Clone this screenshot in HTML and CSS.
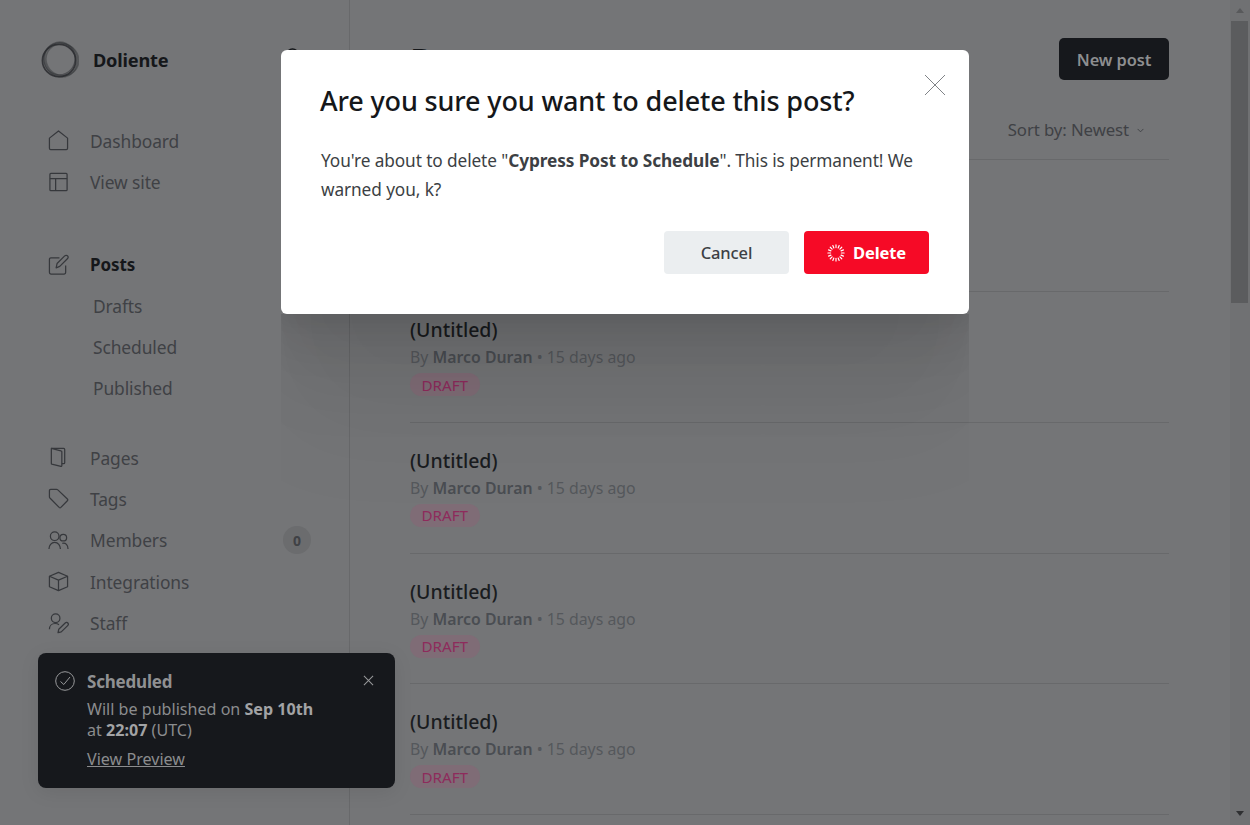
FILE: index.html
```html
<!DOCTYPE html>
<html lang="en">
<head>
<meta charset="utf-8">
<title>Posts - Doliente</title>
<link rel="stylesheet" href="styles.css">
</head>
<body>
<div class="app">
  <aside class="sidebar">
    <div class="brand">
      <svg class="logo" viewBox="0 0 40 40" fill="none" stroke="#2a2c2f">
        <ellipse cx="19" cy="20.500" rx="17.500" ry="17" stroke-width="1.800" opacity=".85"/>
        <ellipse cx="22" cy="18.500" rx="17.500" ry="16.500" stroke-width="1.500" opacity=".4" transform="rotate(30 20 20)"/>
        <ellipse cx="20" cy="19" rx="18.500" ry="17" stroke-width="1.800" opacity=".4" transform="rotate(65 20 20)"/>
        <ellipse cx="19" cy="21" rx="17" ry="16.500" stroke-width="1.400" opacity=".5" transform="rotate(110 20 20)"/>
      </svg>
      <span class="brand-name">Doliente</span>
      <svg class="search" viewBox="0 0 16 16" fill="none" stroke="#15171a" stroke-width="1.500"><circle cx="8" cy="7" r="6"/></svg>
    </div>
    <nav class="nav-group">
      <a class="nav-item">
        <svg class="nav-icon" viewBox="0 0 22 22"><path d="M1.500 8.500 11 1l9.500 7.500v10.700a1.300 1.300 0 0 1-1.300 1.300H2.800a1.300 1.300 0 0 1-1.300-1.300z"/></svg>
        Dashboard</a>
      <a class="nav-item">
        <svg class="nav-icon" viewBox="0 0 22 22"><rect x="2" y="1.500" width="18" height="18" rx="1"/><path d="M2 7h18M8 7v12.500"/></svg>
        View site</a>
    </nav>
    <nav class="nav-group nav-group-tight">
      <a class="nav-item nav-active">
        <svg class="nav-icon" viewBox="0 0 22 22"><path d="M12 4H3a1.500 1.500 0 0 0-1.500 1.500v14A1.500 1.500 0 0 0 3 21h14a1.500 1.500 0 0 0 1.500-1.500V12"/><path d="M8.500 14.500 9.500 10 17.500 2c1-1 2.300-.8 3 0s.8 2-.2 3l-8 8z"/></svg>
        Posts</a>
      <a class="nav-sub">Drafts</a>
      <a class="nav-sub">Scheduled</a>
      <a class="nav-sub">Published</a>
    </nav>
    <nav class="nav-group">
      <a class="nav-item">
        <svg class="nav-icon" viewBox="0 0 22 22"><path d="M3.500 1.500h13a1 1 0 0 1 1 1v14a1 1 0 0 1-1 1h-2"/><path d="M3.500 1.500l10 2.500a1 1 0 0 1 1 1v14.500a.8.800 0 0 1-1 .8l-9.500-2.300a1 1 0 0 1-.5-1z"/></svg>
        Pages</a>
      <a class="nav-item">
        <svg class="nav-icon" viewBox="0 0 22 22"><path d="M1.500 2.800A1.300 1.300 0 0 1 2.800 1.500H9a2 2 0 0 1 1.300.5l10 9.500a1.300 1.300 0 0 1 0 1.800l-6.800 7a1.300 1.300 0 0 1-1.800 0L2 10.500a2 2 0 0 1-.5-1.300z"/></svg>
        Tags</a>
      <a class="nav-item">
        <svg class="nav-icon" viewBox="0 0 22 22"><circle cx="7" cy="6.500" r="4.500"/><path d="M1 20c0-4 2.500-7 6-7s6 3 6 7"/><circle cx="16" cy="8" r="3.500"/><path d="M15 14c3.500-1 6 2 6 6"/></svg>
        Members<span class="count">0</span></a>
      <a class="nav-item">
        <svg class="nav-icon" viewBox="0 0 22 22"><path d="M11 1.500 20.500 5.500v11L11 20.500 1.500 16.500v-11z"/><path d="M1.500 5.500 11 9.500l9.500-4M11 9.500v11"/></svg>
        Integrations</a>
      <a class="nav-item">
        <svg class="nav-icon" viewBox="0 0 22 22"><circle cx="8" cy="5.500" r="4.500"/><path d="M1.500 17c0-3.500 2.500-6 6-6 1.500 0 3 .4 4 1.200"/><path d="M10.500 20.500l.8-3.500 6.700-6.500c1-.9 2.200-.7 2.800 0s.7 1.800-.2 2.700l-6.700 6.600z"/></svg>
        Staff</a>
    </nav>
  </aside>

  <main class="main">
    <header class="page-head">
      <h1 class="page-title">Posts</h1>
      <button class="btn-new">New post</button>
    </header>
    <div class="filters">
      <span class="sort">Sort by: Newest
        <svg class="caret" viewBox="0 0 8 5" fill="none" stroke="#3d3f43" stroke-width="1"><path d="M.7.700 4 4 7.300.700"/></svg>
      </span>
    </div>
    <section class="post-list">
      <article class="post">
        <h2 class="post-title">Cypress Post to Schedule</h2>
        <p class="post-meta">By <b>Marco Duran</b> • 15 days ago</p>
        <span class="badge">SCHEDULED</span>
      </article>
      <article class="post">
        <h2 class="post-title">(Untitled)</h2>
        <p class="post-meta">By <b>Marco Duran</b> • 15 days ago</p>
        <span class="badge">DRAFT</span>
      </article>
      <article class="post">
        <h2 class="post-title">(Untitled)</h2>
        <p class="post-meta">By <b>Marco Duran</b> • 15 days ago</p>
        <span class="badge">DRAFT</span>
      </article>
      <article class="post">
        <h2 class="post-title">(Untitled)</h2>
        <p class="post-meta">By <b>Marco Duran</b> • 15 days ago</p>
        <span class="badge">DRAFT</span>
      </article>
      <article class="post">
        <h2 class="post-title">(Untitled)</h2>
        <p class="post-meta">By <b>Marco Duran</b> • 15 days ago</p>
        <span class="badge">DRAFT</span>
      </article>
    </section>
  </main>

  <div class="scrollbar">
    <span class="arrow-up"></span>
    <span class="thumb-track"><span class="thumb"></span></span>
    <span class="arrow-down"></span>
  </div>
</div>

<div class="toast">
  <svg class="toast-icon" viewBox="0 0 20 20" fill="none" stroke="#98999b" stroke-width="1"><circle cx="10" cy="10" r="9.300"/><path d="M5.500 10.500 8.800 13.500 15 6"/></svg>
  <div class="toast-body">
    <div class="toast-title">Scheduled</div>
    <div class="toast-text">Will be published on <b>Sep 10th</b><br>at <b>22:07</b> (UTC)</div>
    <a class="toast-link">View Preview</a>
  </div>
  <svg class="toast-close" viewBox="0 0 12 12" fill="none" stroke="#98999b" stroke-width="1.100"><path d="M1 1l10 10M11 1 1 11"/></svg>
</div>

<div class="modal" role="dialog">
  <div class="modal-shade"><div class="modal-shade-box"></div></div>
  <svg class="modal-close" viewBox="0 0 22 22" fill="none" stroke="#5f6368" stroke-width=".8"><path d="M1 1l20 20M21 1 1 21"/></svg>
  <h2 class="modal-title">Are you sure you want to delete this post?</h2>
  <p class="modal-text">You're about to delete "<b>Cypress Post to Schedule</b>". This is permanent! We warned you, k?</p>
  <div class="modal-actions">
    <button class="btn btn-cancel">Cancel</button>
    <button class="btn btn-delete">
      <svg class="spinner" viewBox="0 0 20 20" stroke="#fff" stroke-width="1.300" stroke-linecap="round">
        <path d="M10 1v3"/><path d="M10 16v3"/><path d="M1 10h3"/><path d="M16 10h3"/>
        <path d="M3.600 3.600l2.100 2.100"/><path d="M14.300 14.300l2.100 2.100"/><path d="M3.600 16.400l2.100-2.100"/><path d="M14.300 5.700l2.100-2.100"/>
        <path d="M6.500 1.700l1.100 2.700"/><path d="M12.400 15.600l1.100 2.700"/><path d="M1.700 13.500l2.700-1.100"/><path d="M15.600 7.600l2.700-1.100"/>
        <path d="M1.700 6.500l2.700 1.100"/><path d="M15.600 12.400l2.700 1.100"/><path d="M6.500 18.300l1.100-2.700"/><path d="M12.400 4.400l1.100-2.700"/>
      </svg>
      Delete</button>
  </div>
</div>
</body>
</html>
```

FILE: styles.css
```css
* { box-sizing: border-box; }
html, body { margin: 0; height: 825px; overflow: hidden; }
body {
  background: #747577;
  color: #3f4145;
  font-family: "Noto Sans", "Open Sans", sans-serif;
  font-size: 17.400px;
}
.app { display: flex; height: 825px; }

/* sidebar */
.sidebar {
  width: 350px;
  flex: none;
  border-right: 1px solid #68696b;
  padding: 41px 0 0 41px;
}
.brand { display: flex; align-items: center; height: 38px; margin-bottom: 41px; }
.logo { width: 38px; height: 38px; flex: none; }
.brand-name { margin-left: 14px; font-size: 18.200px; font-weight: 700; color: #15171a; letter-spacing: -.2px; }
.search { width: 15px; height: 15px; align-self: flex-start; margin: 7px 49px 0 auto; }
.nav-group { display: flex; flex-direction: column; margin-bottom: 41px; }
.nav-group-tight { margin-bottom: 28.100px; }
.nav-item, .nav-sub {
  display: flex;
  align-items: center;
  height: 41.400px;
  letter-spacing: -.1px;
}
.nav-item { padding-left: 7px; position: relative; }
.nav-sub { padding-left: 52px; height: 41.200px; }
.nav-active { color: #15171a; font-weight: 700; font-size: 17px; }
.nav-icon {
  width: 21px;
  height: 21px;
  flex: none;
  margin-right: 21px;
  fill: none;
  stroke: #36383c;
  stroke-width: 1.300;
  stroke-linejoin: round;
}
.count {
  display: flex;
  align-items: center;
  justify-content: center;
  width: 28px;
  height: 28px;
  margin-left: auto;
  margin-right: 38px;
  border-radius: 50%;
  background: #6b6c6e;
  font-size: 14px;
  font-weight: 700;
  letter-spacing: 0;
}

/* main */
.main { flex: 1; min-width: 0; padding: 0 61px 0 60px; }
.page-head {
  display: flex;
  justify-content: space-between;
  align-items: flex-start;
  height: 96px;
  padding-top: 38px;
}
.page-title { margin: 3px 0 0; font-size: 36px; line-height: 42px; font-weight: 700; color: #15171a; }
.btn-new {
  width: 110px;
  height: 42px;
  border: 0;
  border-radius: 5px;
  background: #16181c;
  color: #8d8e90;
  font: 600 16.400px "Noto Sans", sans-serif;
  letter-spacing: -.1px;
}
.filters {
  display: flex;
  justify-content: flex-end;
  align-items: center;
  height: 64px;
  border-bottom: 1px solid #68696b;
  padding: 4px 25px 0 0;
}
.sort {
  display: flex;
  align-items: center;
  gap: 8px;
  font-size: 16.800px;
  letter-spacing: -.1px;
  white-space: nowrap;
}
.caret { width: 7px; height: 5px; margin-top: 1px; }
.post-list { display: flex; flex-direction: column; margin-top: 1.250px; }
.post {
  height: 130.750px;
  border-bottom: 1px solid #68696b;
  padding-top: 25px;
}
.post-title { margin: 0; font-size: 19.500px; line-height: 26px; font-weight: 500; color: #1a1c1f; }
.post-meta { margin: 2px 0 0; font-size: 15.850px; line-height: 24px; color: #55585c; }
.post-meta b { color: #4a4d52; font-weight: 600; }
.badge {
  display: inline-flex;
  align-items: center;
  height: 23px;
  margin-top: 4px;
  padding: 0 11.500px;
  border-radius: 12px;
  background: #7f6c76;
  color: #8e2b5c;
  font-size: 15.200px;
}

/* fake scrollbar */
.scrollbar {
  width: 20px;
  flex: none;
  display: flex;
  flex-direction: column;
  align-items: center;
  background: #707173;
  padding: 8px 0 9px;
}
.arrow-up, .arrow-down { width: 0; height: 0; border-left: 4.500px solid transparent; border-right: 4.500px solid transparent; }
.arrow-up { border-bottom: 5px solid #58595b; }
.arrow-down { border-top: 5px solid #2f3032; }
.thumb-track { flex: 1; width: 100%; padding: 8px 2px 0 1px; }
.thumb { display: block; height: 282px; background: #5b5c5e; }

/* toast */
.toast {
  position: absolute;
  left: 38px;
  top: 653px;
  width: 357px;
  height: 135px;
  display: flex;
  padding: 18px 20px 0 17px;
  border-radius: 8px;
  background: #16181c;
  box-shadow: 0 4px 20px rgba(0,0,0,.08);
  color: #8b8c8e;
}
.toast-icon { width: 20px; height: 20px; flex: none; margin-right: 12px; }
.toast-body { flex: 1; font-size: 16.100px; line-height: 21px; }
.toast-title { font-size: 17px; line-height: 21px; font-weight: 700; color: #8f9092; margin-bottom: 7px; letter-spacing: -.2px; }
.toast-text b { color: #a2a3a5; font-weight: 700; }
.toast-link { display: inline-block; margin-top: 8px; text-decoration: underline; }
.toast-close { width: 11px; height: 11px; flex: none; margin-top: 4px; margin-right: 1px; }

/* modal */
.modal {
  position: absolute;
  left: 281px;
  top: 50px;
  width: 688px;
  height: 264px;
  padding: 33px 40px 0 39px;
  border-radius: 6px;
  background: #fff;
  color: #3c3f44;
}
.modal-shade {
  position: absolute;
  top: 100%;
  left: 0;
  right: 0;
  height: 220px;
  overflow: hidden;
  pointer-events: none;
}
.modal-shade-box {
  position: absolute;
  left: 0;
  right: 0;
  bottom: 100%;
  height: 264px;
  box-shadow: 0 8px 16px rgba(0,0,0,.05), 0 30px 40px rgba(0,0,0,.07), 0 70px 70px rgba(0,0,0,.055), 0 120px 110px rgba(0,0,0,.04);
}
.modal-close { position: absolute; top: 24px; right: 23px; width: 22px; height: 22px; }
.modal-title { margin: 0; font-size: 27px; line-height: 36px; font-weight: 500; color: #15171a; letter-spacing: -.15px; }
.modal-text { margin: 28px 0 0 1px; font-size: 17.250px; line-height: 28.500px; letter-spacing: -.1px; }
.modal-text b { font-weight: 700; }
.modal-actions { display: flex; justify-content: flex-end; gap: 15px; margin-top: 27px; }
.btn {
  display: flex;
  align-items: center;
  justify-content: center;
  width: 125px;
  height: 43px;
  border: 0;
  border-radius: 4px;
  font: 500 16.500px "Noto Sans", sans-serif;
  letter-spacing: -.1px;
}
.btn-cancel { background: #ebeef0; color: #3c3f44; }
.btn-delete { background: #f60a26; color: #fff; font-weight: 700; }
.spinner { width: 18px; height: 18px; margin-right: 8px; }
```
